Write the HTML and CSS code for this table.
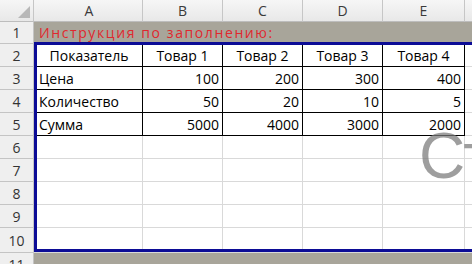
FILE: index.html
```html
<!DOCTYPE html>
<html lang="ru">
<head>
  <meta charset="UTF-8" />
  <title>Лист1</title>
  <link rel="stylesheet" href="styles.css">
</head>
<body>
  <div class="sheet">
    <div class="row head">
      <div class="hdr corner"><span class="tri"></span></div>
      <div class="cell">A</div>
      <div class="cell">B</div>
      <div class="cell">C</div>
      <div class="cell">D</div>
      <div class="cell">E</div>
      <div class="cell"></div>
    </div>

    <div class="row note">
      <div class="hdr">1</div>
      <div class="cell span"><span class="hint">Инструкция по заполнению:</span></div>
    </div>

    <div class="row">
      <div class="hdr">2</div>
      <div class="cell tb ctr">Показатель</div>
      <div class="cell tb ctr">Товар 1</div>
      <div class="cell tb ctr">Товар 2</div>
      <div class="cell tb ctr">Товар 3</div>
      <div class="cell tb ctr">Товар 4</div>
      <div class="cell"></div>
    </div>
    <div class="row">
      <div class="hdr">3</div>
      <div class="cell tb">Цена</div>
      <div class="cell tb num">100</div>
      <div class="cell tb num">200</div>
      <div class="cell tb num">300</div>
      <div class="cell tb num">400</div>
      <div class="cell"></div>
    </div>
    <div class="row">
      <div class="hdr">4</div>
      <div class="cell tb">Количество</div>
      <div class="cell tb num">50</div>
      <div class="cell tb num">20</div>
      <div class="cell tb num">10</div>
      <div class="cell tb num">5</div>
      <div class="cell"></div>
    </div>
    <div class="row">
      <div class="hdr">5</div>
      <div class="cell tb">Сумма</div>
      <div class="cell tb num">5000</div>
      <div class="cell tb num">4000</div>
      <div class="cell tb num">3000</div>
      <div class="cell tb num">2000</div>
      <div class="cell"></div>
    </div>

    <div class="row"><div class="hdr">6</div><div class="cell"></div><div class="cell"></div><div class="cell"></div><div class="cell"></div><div class="cell"></div><div class="cell"></div></div>
    <div class="row"><div class="hdr">7</div><div class="cell"></div><div class="cell"></div><div class="cell"></div><div class="cell"></div><div class="cell"></div><div class="cell"></div></div>
    <div class="row"><div class="hdr">8</div><div class="cell"></div><div class="cell"></div><div class="cell"></div><div class="cell"></div><div class="cell"></div><div class="cell"></div></div>
    <div class="row"><div class="hdr">9</div><div class="cell"></div><div class="cell"></div><div class="cell"></div><div class="cell"></div><div class="cell"></div><div class="cell"></div></div>
    <div class="row last"><div class="hdr">10</div><div class="cell"></div><div class="cell"></div><div class="cell"></div><div class="cell"></div><div class="cell"></div><div class="cell"></div></div>

    <div class="row tail">
      <div class="hdr">11</div>
      <div class="cell span"></div>
    </div>

    <!-- selection frame drawn over the input area -->
    <div class="frame"></div>
    <div class="mark">Ст</div>
  </div>
</body>
</html>
```

FILE: styles.css
```css
* {
  box-sizing: border-box;
}
html, body {
  margin: 0;
  background: #fff;
  overflow: hidden;
}
body {
  font-family: "Open Sans", "Liberation Sans", sans-serif;
  font-size: 14px;
  color: #000;
}
.sheet {
  position: relative;
  width: 472px;
  height: 264px;
  overflow: hidden;
  background: #fff;
}

/* one spreadsheet row: row number + columns A..F */
.row {
  display: grid;
  grid-template-columns: 34px 109px 80px 80px 80px 82px 1fr;
  height: 23px;
}
.hdr,
.cell {
  display: flex;
  align-items: center;
  min-width: 0;
  white-space: nowrap;
  overflow: hidden;
  border-right: 1px solid #d9d9d9;
  border-bottom: 1px solid #d9d9d9;
  padding: 0 3px;
}
.cell:last-child {
  border-right: none;
}
.hdr {
  justify-content: center;
  background: #efefef;
  color: #333;
  border-right-color: #c4c4c4;
  border-bottom-color: #c4c4c4;
}
.span {
  grid-column: 2 / -1;
}

/* column letters */
.head {
  height: 22px;
}
.head .hdr,
.head .cell {
  justify-content: center;
  background: linear-gradient(#f6f6f6, #e8e8e8);
  color: #3a3a3a;
  border-right-color: #c6c6c6;
  border-bottom-color: #bdbdbd;
}
.corner {
  position: relative;
}
.tri {
  position: absolute;
  right: 3px;
  bottom: 3px;
  width: 0;
  height: 0;
  border-left: 12px solid transparent;
  border-bottom: 12px solid #b8b8b8;
}

/* gray instruction band and the band under the form */
.note {
  height: 22px;
}
.note .span {
  background: #a8a59a;
  border-bottom: none;
  padding: 0 2px 2px;
}
.hint {
  color: #e0282e;
  letter-spacing: 1.6px;
}
.tail .span {
  background: #a8a59a;
  border: none;
}
.row .hdr + .cell {
  padding-left: 5px;
}
.last {
  height: 25px;
}

/* blue frame: left, top and bottom edges only */
.frame {
  position: absolute;
  left: 34px;
  top: 42px;
  width: 500px;
  height: 210px;
  border-top: 3px solid #0c0c96;
  border-left: 3px solid #0c0c96;
  border-bottom: 3px solid #0c0c96;
  pointer-events: none;
}

/* product table */
.tb {
  border-right-color: #000;
  border-bottom-color: #000;
}
.ctr {
  justify-content: center;
}
.num {
  justify-content: flex-end;
}

/* large overlay lettering at the right edge */
.mark {
  position: absolute;
  left: 419px;
  top: 124px;
  font-family: "Liberation Sans", sans-serif;
  font-size: 64px;
  line-height: 1;
  letter-spacing: -2px;
  color: rgba(120, 120, 120, 0.72);
  pointer-events: none;
}
```
